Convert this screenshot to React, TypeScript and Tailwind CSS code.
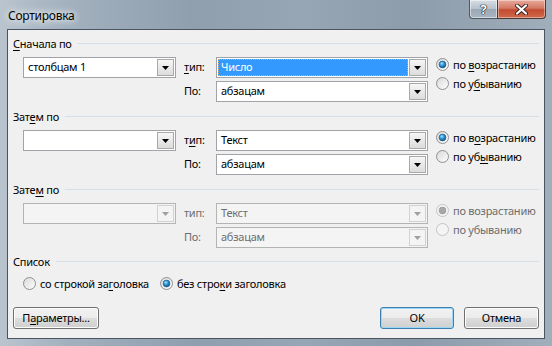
import React from "react";

const U = ({ c }: { c: string }) => (
  <span className="underline decoration-1 underline-offset-[2px]">{c}</span>
);

function Arrow({ disabled }: { disabled?: boolean }) {
  return (
    <svg width="7" height="4" viewBox="0 0 7 4">
      <path d="M0 0 H7 L3.5 4 Z" fill={disabled ? "#a0a0a0" : "#000"} />
    </svg>
  );
}

function DropBtn({ disabled }: { disabled?: boolean }) {
  return (
    <div
      className={
        disabled
          ? "my-[1px] mr-[1px] flex w-[17px] items-center justify-center border border-[#d2d2d2] bg-[#f4f4f4]"
          : "my-[1px] mr-[1px] flex w-[17px] items-center justify-center border border-[#a9a9a9] bg-gradient-to-b from-[#f6f6f6] to-[#dcdcdc]"
      }
    >
      <Arrow disabled={disabled} />
    </div>
  );
}

function Combo({
  value,
  w,
  disabled,
  selected,
}: {
  value: string;
  w: string;
  disabled?: boolean;
  selected?: boolean;
}) {
  return (
    <div
      className={
        (disabled
          ? "border-[#b4b4b4] bg-[#f4f4f4] text-[#6d6d6d] "
          : "border-[#a0a3a8] bg-white text-black ") +
        "flex h-[21px] border " +
        w
      }
    >
      <div className="flex min-w-0 flex-1 items-center p-[1px]">
        {selected ? (
          <div className="flex h-full w-full items-center border border-dotted border-[#d9a66b] bg-[#3399ff] pl-[2px] text-white">
            {value}
          </div>
        ) : (
          <div className="pl-[3px]">{value}</div>
        )}
      </div>
      <DropBtn disabled={disabled} />
    </div>
  );
}

function Radio({ checked, disabled }: { checked?: boolean; disabled?: boolean }) {
  return (
    <svg width="13" height="13" viewBox="0 0 13 13" className="shrink-0">
      <defs>
        <linearGradient id="rbg" x1="0" y1="0" x2="1" y2="1">
          <stop offset="0" stopColor="#d8d8d8" />
          <stop offset="1" stopColor="#ffffff" />
        </linearGradient>
        <radialGradient id="rdot" cx="0.4" cy="0.35" r="0.7">
          <stop offset="0" stopColor="#9fe2ff" />
          <stop offset="0.5" stopColor="#2a8fd2" />
          <stop offset="1" stopColor="#0e4f7e" />
        </radialGradient>
      </defs>
      <circle
        cx="6.5"
        cy="6.5"
        r="6"
        fill={disabled ? "#f4f4f4" : "url(#rbg)"}
        stroke={disabled ? "#c4c4c4" : "#8e8f8f"}
        strokeWidth="1"
      />
      {checked && (
        <circle
          cx="6.5"
          cy="6.5"
          r="3.4"
          fill={disabled ? "#a8a8a8" : "url(#rdot)"}
          stroke={disabled ? "#909090" : "#1b4f78"}
          strokeWidth="0.6"
        />
      )}
    </svg>
  );
}

function RadioItem({
  checked,
  disabled,
  children,
}: {
  checked?: boolean;
  disabled?: boolean;
  children: React.ReactNode;
}) {
  return (
    <div className={"flex h-[14px] items-center gap-[4px] whitespace-nowrap " + (disabled ? "text-[#6d6d6d]" : "text-black")}>
      <Radio checked={checked} disabled={disabled} />
      <span className="leading-none">{children}</span>
    </div>
  );
}

function Header({ children, mt }: { children: React.ReactNode; mt: string }) {
  return (
    <div className={"flex h-[14px] items-center " + mt}>
      <span className="leading-none">{children}</span>
      <div className="ml-[6px] h-px flex-1 bg-[#d5dfe5]" />
    </div>
  );
}

function SortSection({
  title,
  first,
  type,
  typeLabel,
  poLabel,
  asc,
  desc,
  disabled,
  selected,
}: {
  title: React.ReactNode;
  first: string;
  type: string;
  typeLabel: React.ReactNode;
  poLabel: React.ReactNode;
  asc: React.ReactNode;
  desc: React.ReactNode;
  disabled?: boolean;
  selected?: boolean;
}) {
  const lbl = disabled ? "text-[#6d6d6d]" : "text-black";
  return (
    <>
      {title}
      <div className="mt-[7px] flex items-start pl-[10px]">
        <div className="flex flex-col gap-[3px]">
          <div className="flex items-center">
            <Combo value={first} w="w-[153px]" disabled={disabled} />
            <span className={"ml-[8px] w-[32px] " + lbl}>{typeLabel}</span>
            <Combo value={type} w="w-[212px]" disabled={disabled} selected={selected} />
          </div>
          <div className="flex items-center">
            <div className="w-[161px]" />
            <span className={"w-[32px] " + lbl}>{poLabel}</span>
            <Combo value="абзацам" w="w-[212px]" disabled={disabled} />
          </div>
        </div>
        <div className="ml-[8px] flex flex-col gap-[5px]">
          <RadioItem checked disabled={disabled}>{asc}</RadioItem>
          <RadioItem disabled={disabled}>{desc}</RadioItem>
        </div>
      </div>
    </>
  );
}

function WinButton({
  children,
  w,
  focused,
}: {
  children: React.ReactNode;
  w: string;
  focused?: boolean;
}) {
  return (
    <div
      className={
        "flex h-[22px] items-center justify-center rounded-[3px] border bg-[linear-gradient(#f2f2f2,#ebebeb_50%,#dddddd_50%,#cfcfcf)] " +
        (focused
          ? "border-[#3c7fb1] shadow-[inset_0_0_0_1px_#9ad9f6] "
          : "border-[#707070] shadow-[inset_0_0_0_1px_#fcfcfc] ") +
        w
      }
    >
      {children}
    </div>
  );
}

export default function App() {
  return (
    <div className="h-[346px] w-[552px] overflow-hidden bg-[linear-gradient(90deg,#b9c4ce_0%,#a3b1be_12%,#8f9fae_35%,#97a6b5_55%,#8d9cab_75%,#a1aebb_100%)] font-['Noto_Sans',sans-serif] text-[11px] tracking-[-0.25px] text-black">
      <div className="flex h-[29px] items-start">
        <div className="flex h-[29px] flex-1 items-center pl-[8px] pt-[2px]">
          <span className="text-[12px] [text-shadow:0_0_6px_#fff,0_0_10px_#fff]">Сортировка</span>
        </div>
        <div className="mr-[6px] flex h-[19px]">
          <div className="flex w-[28px] items-center justify-center rounded-bl-[4px] border border-r-0 border-t-0 border-[#4c5866] bg-[linear-gradient(#d6dde4,#b6c1cc_50%,#9aa7b4_50%,#a9b5c1)] shadow-[inset_0_0_0_1px_rgba(255,255,255,0.5)]">
            <span className="text-[13px] font-bold leading-none text-white [text-shadow:0_0_1px_#000,0_0_1px_#000,0_0_1px_#000]">?</span>
          </div>
          <div className="flex w-[49px] items-center justify-center rounded-br-[4px] border border-t-0 border-[#4c3a36] bg-[linear-gradient(#e9a99b,#d47a66_45%,#c24b31_55%,#d06a4c)] shadow-[inset_0_0_0_1px_rgba(255,255,255,0.4)]">
            <svg width="13" height="11" viewBox="0 0 13 11">
              <path d="M2 1.5 L11 9.5 M11 1.5 L2 9.5" stroke="#3a2420" strokeWidth="4" strokeLinecap="round" />
              <path d="M2 1.5 L11 9.5 M11 1.5 L2 9.5" stroke="#fff" strokeWidth="2.2" strokeLinecap="round" />
            </svg>
          </div>
        </div>
      </div>
      <div className="ml-[7px] h-[310px] w-[538px] border border-[#4a5563] bg-[#f0f0f0]">
        <div className="flex flex-col pl-[5px] pr-[5px] pt-[6px]">
          <SortSection
            title={<Header mt="">{<><U c="С" />начала по</>}</Header>}
            first="столбцам 1"
            type="Число"
            selected
            typeLabel={<><U c="т" />ип:</>}
            poLabel="По:"
            asc={<>по <U c="в" />озрастанию</>}
            desc={<>по у<U c="б" />ыванию</>}
          />
          <SortSection
            title={<Header mt="mt-[7px]">{<>Зат<U c="е" />м по</>}</Header>}
            first=""
            type="Текст"
            typeLabel={<>т<U c="и" />п:</>}
            poLabel="По:"
            asc={<>по в<U c="о" />зрастанию</>}
            desc={<>по уб<U c="ы" />ванию</>}
          />
          <SortSection
            title={<Header mt="mt-[7px]">{<>Зате<U c="м" /> по</>}</Header>}
            first=""
            type="Текст"
            disabled
            typeLabel="тип:"
            poLabel="По:"
            asc="по возрастанию"
            desc="по убыванию"
          />
          <Header mt="mt-[6px]">Список</Header>
          <div className="mt-[8px] flex items-center pl-[10px]">
            <RadioItem>со строкой за<U c="г" />оловка</RadioItem>
            <div className="ml-[11px]">
              <RadioItem checked>без стро<U c="к" />и заголовка</RadioItem>
            </div>
          </div>
          <div className="mt-[17px] flex items-center">
            <WinButton w="w-[86px]">
              <span>П<U c="а" />раметры...</span>
            </WinButton>
            <div className="flex-1" />
            <WinButton w="w-[74px]" focused>
              OK
            </WinButton>
            <div className="w-[10px]" />
            <WinButton w="w-[75px]">Отмена</WinButton>
          </div>
        </div>
      </div>
    </div>
  );
}
